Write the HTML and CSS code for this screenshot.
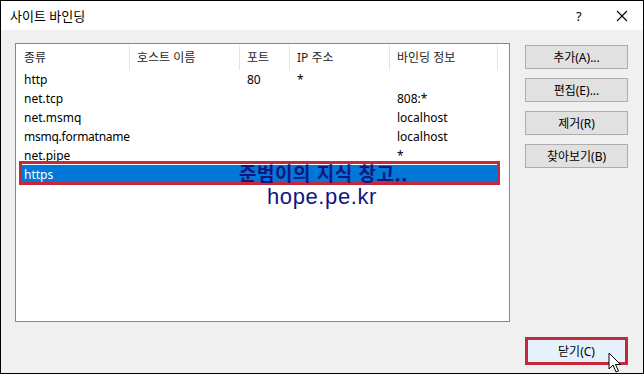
FILE: index.html
```html
<!DOCTYPE html>
<html lang="ko">
<head>
<meta charset="utf-8">
<link rel="stylesheet" href="styles.css">
</head>
<body>
<div class="window">
  <div class="titlebar">
    <span class="title">사이트 바인딩</span>
    <span class="help">?</span>
    <span class="close">
      <svg width="12" height="12" viewBox="0 0 12 12"><path d="M1 1L11 11M11 1L1 11" stroke="#000" stroke-width="1.1" fill="none"/></svg>
    </span>
  </div>
  <div class="content">
    <div class="main">
      <div class="list">
        <div class="row header">
          <div class="cell">종류</div>
          <div class="cell">호스트 이름</div>
          <div class="cell">포트</div>
          <div class="cell">IP 주소</div>
          <div class="cell">바인딩 정보</div>
          <div class="cell last"></div>
        </div>
        <div class="row"><div class="cell">http</div><div class="cell"></div><div class="cell">80</div><div class="cell">*</div><div class="cell"></div></div>
        <div class="row"><div class="cell">net.tcp</div><div class="cell"></div><div class="cell"></div><div class="cell"></div><div class="cell">808:*</div></div>
        <div class="row"><div class="cell">net.msmq</div><div class="cell"></div><div class="cell"></div><div class="cell"></div><div class="cell">localhost</div></div>
        <div class="row"><div class="cell narrow">msmq.formatname</div><div class="cell"></div><div class="cell"></div><div class="cell"></div><div class="cell">localhost</div></div>
        <div class="row"><div class="cell">net.pipe</div><div class="cell"></div><div class="cell"></div><div class="cell"></div><div class="cell">*</div></div>
        <div class="row selected"><div class="cell">https</div><div class="cell"></div><div class="cell"></div><div class="cell"></div><div class="cell"></div></div>
        <div class="highlight-box"></div>
        <div class="watermark">
          <div class="wm1">준범이의 지식 창고..</div>
          <div class="wm2">hope.pe.kr</div>
        </div>
      </div>
      <div class="buttons">
        <button class="btn">추가(A)...</button>
        <button class="btn">편집(E)...</button>
        <button class="btn">제거(R)</button>
        <button class="btn">찾아보기(B)</button>
      </div>
    </div>
    <div class="footer">
      <button class="btn close-btn">닫기(C)</button>
      <svg class="cursor" width="14" height="22" viewBox="0 0 14 22">
        <path d="M1 1 L1 17 L5 13 L8 20 L10.5 19 L7.5 12.5 L12.5 12.5 Z" fill="#fff" stroke="#000" stroke-width="1" stroke-linejoin="miter"/>
      </svg>
    </div>
  </div>
</div>
</body>
</html>
```

FILE: styles.css
```css
html, body {
  margin: 0;
  padding: 0;
  background: #fff;
}
.window {
  width: 644px;
  height: 374px;
  box-sizing: border-box;
  border: 1px solid #000;
  display: flex;
  flex-direction: column;
  font-family: "Noto Sans", "Noto Sans CJK KR", sans-serif;
  font-size: 12px;
  color: #000;
  overflow: hidden;
}
.titlebar {
  height: 29px;
  background: #fff;
  display: flex;
  align-items: center;
  padding-left: 9px;
  flex: none;
}
.title {
  font-size: 13px;
  flex: 1;
  color: #000;
}
.help {
  font-size: 13px;
  width: 31px;
  text-align: left;
}
.close {
  width: 36px;
  display: flex;
  align-items: center;
  padding-left: 9px;
  box-sizing: border-box;
}
.content {
  flex: 1;
  background: #f0f0f0;
  padding: 13px 0 0 14px;
  display: flex;
  flex-direction: column;
}
.main {
  display: flex;
  gap: 15px;
}
.list {
  position: relative;
  width: 495px;
  height: 279px;
  box-sizing: border-box;
  border: 1px solid #828790;
  background: #fff;
  padding-top: 1px;
}
.row {
  display: grid;
  grid-template-columns: 114px 110px 50px 100px 108px 1fr;
  height: 19px;
  align-items: center;
  line-height: 19px;
}
.cell {
  padding-left: 8px;
  white-space: nowrap;
}
.cell.narrow {
  letter-spacing: -0.25px;
}
.row .cell:nth-child(2),
.row .cell:nth-child(3),
.row .cell:nth-child(4),
.row .cell:nth-child(5) {
  padding-left: 7px;
}
.header {
  height: 25px;
  line-height: 25px;
}
.header .cell {
  height: 25px;
  border-right: 1px solid #e5e5e5;
  color: #1e1e1e;
}
.header .cell.last {
  border-right: none;
}
.row.selected {
  background: #0078d7;
  color: #fff;
  margin: 0 10px 0 4px;
  grid-template-columns: 110px 110px 50px 100px 108px 1fr;
}
.row.selected .cell:first-child {
  padding-left: 4px;
}
.highlight-box {
  position: absolute;
  left: 3px;
  top: 117px;
  width: 481px;
  height: 24px;
  box-sizing: border-box;
  border: 3px solid #c4283a;
}
.watermark {
  position: absolute;
  left: 195px;
  top: 119px;
  width: 200px;
  color: #15157f;
  pointer-events: none;
}
.wm1 {
  font-family: "Noto Sans CJK KR", sans-serif;
  font-weight: 700;
  font-size: 19px;
  line-height: 20px;
  height: 22px;
  letter-spacing: 0.5px;
  margin-left: 28px;
  white-space: nowrap;
}
.wm2 {
  font-family: "Liberation Sans", Arial, sans-serif;
  font-size: 22px;
  line-height: 24px;
  letter-spacing: 0.6px;
  margin-left: 56px;
  white-space: nowrap;
}
.buttons {
  display: flex;
  flex-direction: column;
  gap: 9px;
  padding-top: 2px;
}
.btn {
  width: 103px;
  height: 24px;
  box-sizing: border-box;
  border: 1px solid #adadad;
  background: #e1e1e1;
  font-family: "Noto Sans", "Noto Sans CJK KR", sans-serif;
  font-size: 12px;
  color: #000;
  padding: 0;
  margin: 0;
}
.footer {
  position: relative;
  display: flex;
  justify-content: flex-end;
  padding-right: 15px;
  padding-top: 15px;
}
.close-btn {
  height: 28px;
  border: 3px solid #c4283a;
  background: #e5f1fb;
}
.cursor {
  position: absolute;
  left: 593px;
  top: 30px;
}
```
